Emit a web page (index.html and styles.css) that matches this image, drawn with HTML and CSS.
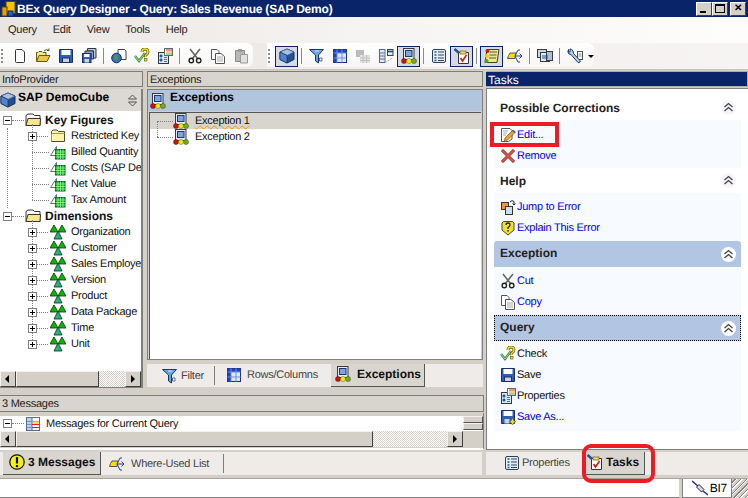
FILE: index.html
```html
<!DOCTYPE html>
<html lang="en">

<head>
    <meta charset="UTF-8">
    <title>BEx Query Designer</title>
    <link rel="stylesheet" href="styles.css">
</head>

<body>
    <svg class="icon-defs" width="0" height="0">
        <symbol id="i-page" viewBox="0 0 16 16"><path d="M3.5 2.5Q3.5 1.5 4.5 1.5H10L12.500 4V13.500Q12.500 14.500 11.500 14.500H4.500Q3.500 14.500 3.500 13.500Z" fill="#fff" stroke="#333"/></symbol>
        <symbol id="i-open" viewBox="0 0 16 16"><path d="M1.500 13.500V4.500H3L4 3.500H7L8 4.500H11V7" fill="#f7e58c" stroke="#665a10"/><path d="M1.500 13.500L4 7.500H15L12 13.500Z" fill="#e8c94a" stroke="#665a10"/><path d="M9 3Q11 0.500 14 2.500M14 2.500V0.500M14 2.500H12" fill="none" stroke="#2a5a2a"/></symbol>
        <symbol id="i-save" viewBox="0 0 16 16"><path d="M1.500 1.500H14.500V14.500H1.500Z" fill="#2e5fb5" stroke="#1a2f6a"/><rect x="3.500" y="2" width="9" height="5" fill="#fff"/><rect x="4.500" y="10" width="7" height="4.500" fill="#c9d3e6" stroke="#1a2f6a"/></symbol>
        <symbol id="i-saveall" viewBox="0 0 16 16"><path d="M6.500 0.500H15V10H12.500V3H6.500Z" fill="#b9c6dd" stroke="#333"/><path d="M4 3H12.500V11H10V5.500H4Z" fill="#8da3c9" stroke="#333"/><rect x="1.500" y="5.500" width="8.500" height="9" fill="#2e5fb5" stroke="#1a2f6a"/><rect x="3" y="6" width="5.500" height="3" fill="#fff"/><rect x="3.500" y="11" width="4.500" height="3.500" fill="#c9d3e6"/></symbol>
        <symbol id="i-cubeglobe" viewBox="0 0 16 16"><path d="M7 1.500H13.500L15 3V11.500H7Z" fill="#fff" stroke="#444"/><circle cx="5.500" cy="10" r="4.800" fill="#3c6fc0" stroke="#1a2f6a"/><path d="M3 7.500L6.500 6.500L7 10L5 13L3.500 10.500Z" fill="#4d9a3c"/></symbol>
        <symbol id="i-check" viewBox="0 0 16 16"><path d="M1 8L5 13L11 5" fill="none" stroke="#3d8b3d" stroke-width="2.400"/><path d="M1 8L5 13L11 5" fill="none" stroke="#bce0a8" stroke-width="0.800"/><path d="M8 4Q8 1 11 1T14 4Q14 5.500 12.500 6.500T11.500 9" fill="none" stroke="#5c5200" stroke-width="2.800"/><path d="M8 4Q8 1 11 1T14 4Q14 5.500 12.500 6.500T11.500 9" fill="none" stroke="#f2e020" stroke-width="1.500"/><rect x="10.500" y="10.500" width="2.500" height="2.500" fill="#f2e020" stroke="#5c5200" stroke-width="0.600"/></symbol>
        <symbol id="i-props" viewBox="0 0 16 16"><rect x="1.500" y="4.500" width="10" height="11" fill="#dce7f7" stroke="#334"/><path d="M3 7H5V9H3ZM3 11H5V13H3ZM7 7.500H10M7 9.500H10M7 11.500H10M7 13.500H10" fill="#1b5a9c" stroke="#1b5a9c" stroke-width="0.800"/><rect x="7.500" y="0.500" width="8" height="7" fill="#fff" stroke="#666"/><path d="M9 2H15" stroke="#d22" /><path d="M9 4H15" stroke="#e90"/><path d="M9 6H15" stroke="#4a4"/></symbol>
        <symbol id="i-cut" viewBox="0 0 16 16"><path d="M3 1L10.500 10.500M13 1L5.500 10.500" fill="none" stroke="#5d6560" stroke-width="1.500"/><circle cx="4.300" cy="12.500" r="2.200" fill="#fff" stroke="#222" stroke-width="1.400"/><circle cx="11.700" cy="12.500" r="2.200" fill="#fff" stroke="#222" stroke-width="1.400"/></symbol>
        <symbol id="i-copy" viewBox="0 0 16 16"><path d="M1.500 1.500H7L9 3.500V11.500H1.500Z" fill="#fff" stroke="#555"/><path d="M5.500 5.500H11L14.500 8.500V15.500H5.500Z" fill="#fff" stroke="#555"/><path d="M7 9H13M7 11H13M7 13H13" stroke="#aaa"/></symbol>
        <symbol id="i-paste" viewBox="0 0 16 16"><path d="M2.500 2.500H11.500V13.500H2.500Z" fill="#b8b8b8" stroke="#8c8c8c"/><rect x="5" y="1" width="4" height="3" fill="#9a9a9a"/><path d="M7.500 6.500H14.500V15H7.500Z" fill="#e0e0e0" stroke="#9a9a9a"/></symbol>
        <symbol id="i-cube" viewBox="0 0 16 16"><path d="M8 1L15 4V11.500L8 15L1 11.500V4Z" fill="#234e91" stroke="#1a2f5a"/><path d="M8 1L15 4L8 7.500L1 4Z" fill="#a9c0de" stroke="#3b5a8c" stroke-width="0.700"/><path d="M1 4L8 7.500V15L1 11.500Z" fill="#4f86c9" stroke="#1a2f5a" stroke-width="0.700"/></symbol>
        <symbol id="i-filter" viewBox="0 0 16 16"><path d="M0.500 1.500H14.500L9.500 7V15L6.500 13V7Z" fill="#6aa5de" stroke="#16386e"/><path d="M6 3H10" stroke="#d8ebfa"/><path d="M10.500 10H13V13H10.500Z" fill="#fff" stroke="#16386e" stroke-width="0.700"/></symbol>
        <symbol id="i-grid" viewBox="0 0 16 16"><rect x="1.500" y="1.500" width="13" height="13" fill="#dce8fa" stroke="#182f8a"/><path d="M1.500 1.500H14.500V5H1.500ZM1.500 1.500H5V14.500H1.500Z" fill="#2443b8"/><path d="M5 1.500V14.500M10 1.500V14.500M1.500 5H14.500M1.500 10H14.500" stroke="#6f8fe0"/></symbol>
        <symbol id="i-flag" viewBox="0 0 16 16"><rect x="1" y="2" width="8" height="7" fill="#bcbcbc"/><path d="M5 7H15V15H5Z" fill="#e2e2e2"/><path d="M8 7V15M11.500 7V15M5 10H15M5 12.500H15" stroke="#c2c2c2"/></symbol>
        <symbol id="i-fields" viewBox="0 0 16 16"><rect x="1.500" y="1.500" width="5.500" height="13" fill="#dfe8f6" stroke="#5a6a8c"/><path d="M2 5H6.500M2 8H6.500M2 11H6.500" stroke="#5a6a8c"/><rect x="9.500" y="1.500" width="5.500" height="6" fill="#dfe8f6" stroke="#22408c"/><path d="M9.500 3.500H15" stroke="#22408c" stroke-width="1.500"/><path d="M8.500 14L15 9.500" stroke="#8a8a8a" stroke-dasharray="1 1"/></symbol>
        <symbol id="i-exc" viewBox="0 0 16 16"><rect x="2.500" y="0.500" width="10.500" height="11" fill="#e9e9e9" stroke="#3a3a3a"/><rect x="4.500" y="2.500" width="6.500" height="6" fill="#7aa4e4" stroke="#22386c"/><circle cx="3" cy="13" r="2.500" fill="#c11" stroke="#511" stroke-width="0.500"/><circle cx="8" cy="13" r="2.500" fill="#ee1" stroke="#661" stroke-width="0.500"/><circle cx="13" cy="13" r="2.500" fill="#7a2" stroke="#251" stroke-width="0.500"/></symbol>
        <symbol id="i-list" viewBox="0 0 16 16"><rect x="1.500" y="1.500" width="13" height="13" rx="1.500" fill="#e4effc" stroke="#33405c"/><path d="M3.500 4H5.500M3.500 7H5.500M3.500 10H5.500M3.500 12.500H5.500" stroke="#1b5a9c" stroke-width="1.500"/><path d="M7 4H13M7 7H13M7 10H13M7 12.500H13" stroke="#33405c"/></symbol>
        <symbol id="i-tasks" viewBox="0 0 16 16"><path d="M4.500 4.500H14.500V15.500H4.500Z" fill="#fff" stroke="#333"/><rect x="6" y="3" width="6" height="3" fill="#f0dc70" stroke="#665a10" stroke-width="0.700"/><path d="M6.500 10L8.500 13L12.500 7" fill="none" stroke="#d01818" stroke-width="1.600"/><path d="M0.500 1L5 5" stroke="#24509c" stroke-width="2.400"/></symbol>
        <symbol id="i-script" viewBox="0 0 16 16"><path d="M3 1.500H15L13 14.500H1Z" fill="#f0e68c" stroke="#3a4a1a"/><path d="M6 4H13M5.500 7H12.500M5 10H12" stroke="#555"/><circle cx="3.500" cy="3" r="2" fill="#c11"/><circle cx="3" cy="8" r="2" fill="#e5cf20"/><circle cx="2.500" cy="13" r="2" fill="#5a9a2c"/></symbol>
        <symbol id="i-where" viewBox="0 0 16 16"><path d="M1.500 7.500L3 5H9L8 10.500H0.500Z" fill="#f2e000" stroke="#555"/><path d="M8 8H15M12.500 5.500L15 8L12.500 10.500M8 8L11 2H13M8 8L11 14H13" fill="none" stroke="#2a3a9c"/></symbol>
        <symbol id="i-multi" viewBox="0 0 16 16"><rect x="0.500" y="1.500" width="9" height="8" fill="#c9d6ea" stroke="#3a3a3a"/><rect x="3.500" y="4.500" width="9" height="9" fill="#dfe7f3" stroke="#3a3a3a"/><rect x="9.500" y="3.500" width="6" height="9" fill="#aebfdc" stroke="#3a3a3a"/><path d="M5 8H11M5 10H11" stroke="#24509c"/></symbol>
        <symbol id="i-wrench" viewBox="0 0 16 16"><rect x="10.500" y="3.500" width="5" height="8" fill="#fff" stroke="#555"/><path d="M11.500 6H14.500M11.500 8H14.500" stroke="#888"/><path d="M1.500 1.500Q0 4 2 6L4 6.500L10.500 14Q12 15.500 13 14T12 11.500L6.500 5.500L6 3Q4.500 0.500 3 1V4H1.500Z" fill="#b8cfe8" stroke="#16386e"/></symbol>
        <symbol id="i-folder" viewBox="0 0 16 16"><path d="M1.500 3.500L3 2H7L8.500 3.500H14.500V13.500H1.500Z" fill="#fff3b0" stroke="#4a4a2a"/><path d="M1.500 13.500V5.500H14.500" fill="none" stroke="#a89a40"/></symbol>
        <symbol id="i-folderopen" viewBox="0 0 16 16"><path d="M1 13.500V3.500L3 2H8L9.500 3.500H15V13.500Z" fill="#fff" stroke="#333"/><path d="M1 13.500L3 6.500H15.500L15 13.500Z" fill="#f7e98a" stroke="#333"/></symbol>
        <symbol id="i-keyfig" viewBox="0 0 16 16"><path d="M0.500 11.500L6.500 2.500V11.500Z" fill="#fff" stroke="#707070"/><rect x="5.500" y="5.500" width="9.500" height="9.500" fill="#0a0" stroke="#064"/><path d="M8 5.500V15M10.500 5.500V15M13 5.500V15M5.500 8H15M5.500 10.500H15M5.500 13H15" stroke="#9f9" stroke-width="0.800"/></symbol>
        <symbol id="i-dim" viewBox="0 0 16 16"><path d="M4 1L8 8H0Z" fill="#0b0" stroke="#030" stroke-width="0.800"/><path d="M12 1L16 8H8Z" fill="#0b0" stroke="#030" stroke-width="0.800"/><path d="M8 7L12 15H4Z" fill="#3a8" stroke="#030" stroke-width="0.800"/></symbol>
        <symbol id="i-msgs" viewBox="0 0 16 16"><rect x="1.500" y="1.500" width="13" height="13" fill="#fff" stroke="#5a6a8c"/><rect x="2" y="2" width="5" height="12" fill="#b9d3f2"/><path d="M7 2V14" stroke="#5a6a8c"/><path d="M2 5.500H14M2 8.500H14M2 11.500H14" stroke="#7f93b8"/><rect x="8" y="5.500" width="6" height="3" fill="#f2e24a"/><path d="M7 8.500H14M7 11.500H14" stroke="#d22"/></symbol>
        <symbol id="i-warn" viewBox="0 0 16 16"><circle cx="8" cy="8" r="7.200" fill="#f5ee20" stroke="#111" stroke-width="1.200"/><path d="M8 3V9.500" stroke="#111" stroke-width="2.200"/><rect x="6.900" y="11" width="2.200" height="2.200" fill="#111"/></symbol>
        <symbol id="i-edit" viewBox="0 0 16 16"><path d="M1.500 1.500H10L12 3.500V12L8.500 14.500H1.500Z" fill="#fff" stroke="#555"/><path d="M3 4H8M3 6H7M3 8H6" stroke="#9ab"/><path d="M4 15L5 11L13 3L15.500 5L7.500 13Z" fill="#f0a030" stroke="#7a4a10" stroke-width="0.700"/><path d="M13 3L15.500 5L14.500 6L12 4Z" fill="#3a5fc0"/></symbol>
        <symbol id="i-remove" viewBox="0 0 16 16"><path d="M2 2L14 14M14 2L2 14" stroke="#7a1a14" stroke-width="3"/><path d="M2 2L14 14M14 2L2 14" stroke="#e25c48" stroke-width="1.600"/></symbol>
        <symbol id="i-jump" viewBox="0 0 16 16"><rect x="1.500" y="3.500" width="7" height="7" fill="#f09a20" stroke="#333"/><rect x="5.500" y="7.500" width="7" height="8" fill="#cfe0f4" stroke="#333"/><path d="M10 3Q12 0.500 14 2.500V6M12.500 4.500L14 6L15.500 4.500" fill="none" stroke="#222"/></symbol>
        <symbol id="i-explain" viewBox="0 0 16 16"><path d="M3.500 1.500H12.500L14 3V10L8 15L2 10V3Z" fill="#efe02c" stroke="#4a4a2a"/><path d="M6 5Q6 3 8 3T10 5Q10 6.500 8 7.500V9" fill="none" stroke="#222" stroke-width="1.300"/><rect x="7.300" y="10" width="1.500" height="1.500" fill="#222"/></symbol>
        <symbol id="i-saveas" viewBox="0 0 16 16"><path d="M1.500 1.500H14.500V14.500H1.500Z" fill="#2e5fb5" stroke="#1a2f6a"/><rect x="3.500" y="2" width="9" height="5" fill="#fff"/><rect x="4.500" y="10" width="5" height="4.500" fill="#c9d3e6"/><path d="M12.500 9L14 12L16 12.500L14 13.500L12.500 16L11 13.500L9 12.500L11 12Z" fill="#f2e020" stroke="#665a10" stroke-width="0.500"/></symbol>
        <symbol id="i-plug" viewBox="0 0 16 16"><path d="M0 1L6 6M11 11L16 15" stroke="#1a2f8a" stroke-width="1.400"/><path d="M4.500 7L7 4.500L12 9.500L9.500 12Z" fill="#d8d8e8" stroke="#222"/></symbol>
        <symbol id="i-app" viewBox="0 0 16 16"><rect x="5" y="0.500" width="9" height="12" fill="#f5c400" stroke="#5a4400"/><rect x="1" y="6" width="5" height="9" fill="#e8a000" stroke="#5a4400"/><rect x="7" y="10" width="5" height="5" fill="#2a5ec0" stroke="#112a6a"/></symbol>
        <symbol id="i-chev" viewBox="0 0 15 15"><path d="M3.500 7L7.500 3.500L11.500 7M3.500 11L7.500 7.500L11.500 11" fill="none" stroke="#444" stroke-width="1.300"/></symbol>
        <symbol id="i-sort" viewBox="0 0 9 13"><path d="M0.500 5L4.500 1L8.500 5ZM0.500 8L4.500 12L8.500 8Z" fill="#dcd8d2" stroke="#555"/></symbol>
    </svg>

    <div class="window">
        <div class="title-bar">
            <svg class="ico"><use href="#i-app"></use></svg>
            <span class="title-text">BEx Query Designer - Query: Sales Revenue (SAP Demo)</span>
            <div class="win-buttons">
                <span class="win-btn"><i class="glyph-min"></i></span>
                <span class="win-btn"><i class="glyph-max"></i></span>
                <span class="win-btn win-close">✕</span>
            </div>
        </div>

        <div class="menu-bar">
            <span>Query</span>
            <span>Edit</span>
            <span>View</span>
            <span>Tools</span>
            <span>Help</span>
        </div>

        <div class="toolbar-band">
            <div class="toolbar toolbar-first">
                <span class="grip"></span>
                <span class="tool"><svg class="ico"><use href="#i-page"></use></svg></span>
                <span class="tool"><svg class="ico"><use href="#i-open"></use></svg></span>
                <span class="tool"><svg class="ico"><use href="#i-save"></use></svg></span>
                <span class="tool"><svg class="ico"><use href="#i-saveall"></use></svg></span>
                <span class="sep"></span>
                <span class="tool"><svg class="ico"><use href="#i-cubeglobe"></use></svg></span>
                <span class="tool"><svg class="ico"><use href="#i-check"></use></svg></span>
                <span class="tool"><svg class="ico"><use href="#i-props"></use></svg></span>
                <span class="sep"></span>
                <span class="tool"><svg class="ico"><use href="#i-cut"></use></svg></span>
                <span class="tool"><svg class="ico"><use href="#i-copy"></use></svg></span>
                <span class="tool"><svg class="ico"><use href="#i-paste"></use></svg></span>
            </div>
            <div class="toolbar toolbar-second">
                <span class="grip"></span>
                <span class="tool active"><svg class="ico"><use href="#i-cube"></use></svg></span>
                <span class="sep"></span>
                <span class="tool"><svg class="ico"><use href="#i-filter"></use></svg></span>
                <span class="tool"><svg class="ico"><use href="#i-grid"></use></svg></span>
                <span class="tool"><svg class="ico"><use href="#i-flag"></use></svg></span>
                <span class="tool"><svg class="ico"><use href="#i-fields"></use></svg></span>
                <span class="tool active"><svg class="ico"><use href="#i-exc"></use></svg></span>
                <span class="sep"></span>
                <span class="tool"><svg class="ico"><use href="#i-list"></use></svg></span>
                <span class="tool active"><svg class="ico"><use href="#i-tasks"></use></svg></span>
                <span class="sep"></span>
                <span class="tool active"><svg class="ico"><use href="#i-script"></use></svg></span>
                <span class="tool"><svg class="ico"><use href="#i-where"></use></svg></span>
                <span class="sep"></span>
                <span class="tool"><svg class="ico"><use href="#i-multi"></use></svg></span>
                <span class="sep"></span>
                <span class="tool"><svg class="ico"><use href="#i-wrench"></use></svg></span>
                <span class="drop-arrow"></span>
            </div>
        </div>

        <div class="workspace">
            <div class="work-left">
                <div class="work-top">
                    <div class="dock dock-info">
                        <div class="dock-title">InfoProvider</div>
                        <div class="info-panel">
                            <div class="info-head">
                                <svg class="ico"><use href="#i-cube"></use></svg>
                                <span class="info-name">SAP DemoCube</span>
                                <svg class="sorter"><use href="#i-sort"></use></svg>
                            </div>
                            <div class="tree">
                                <div class="tree-row"><span class="box minus"></span><span class="dots"></span><svg class="ico"><use href="#i-folderopen"></use></svg><b>Key Figures</b></div>
                                <div class="branch-root">
                                    <div class="branch">
                                        <div class="tree-row"><span class="box plus"></span><span class="dots"></span><svg class="ico"><use href="#i-folder"></use></svg><span>Restricted Key</span></div>
                                        <div class="tree-row"><span class="dots long"></span><svg class="ico"><use href="#i-keyfig"></use></svg><span>Billed Quantity</span></div>
                                        <div class="tree-row"><span class="dots long"></span><svg class="ico"><use href="#i-keyfig"></use></svg><span>Costs (SAP De</span></div>
                                        <div class="tree-row"><span class="dots long"></span><svg class="ico"><use href="#i-keyfig"></use></svg><span>Net Value</span></div>
                                        <div class="tree-row"><span class="dots long"></span><svg class="ico"><use href="#i-keyfig"></use></svg><span>Tax Amount</span></div>
                                    </div>
                                </div>
                                <div class="tree-row"><span class="box minus"></span><span class="dots"></span><svg class="ico"><use href="#i-folderopen"></use></svg><b>Dimensions</b></div>
                                <div class="branch-plain">
                                    <div class="branch">
                                        <div class="tree-row"><span class="box plus"></span><span class="dots"></span><svg class="ico"><use href="#i-dim"></use></svg><span>Organization</span></div>
                                        <div class="tree-row"><span class="box plus"></span><span class="dots"></span><svg class="ico"><use href="#i-dim"></use></svg><span>Customer</span></div>
                                        <div class="tree-row"><span class="box plus"></span><span class="dots"></span><svg class="ico"><use href="#i-dim"></use></svg><span>Sales Employe</span></div>
                                        <div class="tree-row"><span class="box plus"></span><span class="dots"></span><svg class="ico"><use href="#i-dim"></use></svg><span>Version</span></div>
                                        <div class="tree-row"><span class="box plus"></span><span class="dots"></span><svg class="ico"><use href="#i-dim"></use></svg><span>Product</span></div>
                                        <div class="tree-row"><span class="box plus"></span><span class="dots"></span><svg class="ico"><use href="#i-dim"></use></svg><span>Data Package</span></div>
                                        <div class="tree-row"><span class="box plus"></span><span class="dots"></span><svg class="ico"><use href="#i-dim"></use></svg><span>Time</span></div>
                                        <div class="tree-row"><span class="box plus"></span><span class="dots"></span><svg class="ico"><use href="#i-dim"></use></svg><span>Unit</span></div>
                                    </div>
                                </div>
                            </div>
                            <div class="scrollbar">
                                <span class="sb-btn sb-left"></span>
                                <span class="sb-thumb thumb-info"></span>
                                <span class="sb-track"></span>
                                <span class="sb-btn sb-right"></span>
                            </div>
                        </div>
                    </div>

                    <div class="dock dock-exc">
                        <div class="dock-title">Exceptions</div>
                        <div class="exc-panel">
                            <div class="exc-head">
                                <svg class="ico"><use href="#i-exc"></use></svg>
                                <b>Exceptions</b>
                            </div>
                            <div class="exc-list">
                                <div class="exc-branch">
                                    <div class="exc-row selected"><span class="dots exc-dots"></span><svg class="ico"><use href="#i-exc"></use></svg><span class="squiggle">Exception 1</span></div>
                                    <div class="exc-row"><span class="dots exc-dots"></span><svg class="ico"><use href="#i-exc"></use></svg><span>Exception 2</span></div>
                                </div>
                            </div>
                        </div>
                        <div class="tabs tabs-exc">
                            <span class="tab tab-filter"><svg class="ico"><use href="#i-filter"></use></svg>Filter</span>
                            <span class="tab tab-rows"><svg class="ico"><use href="#i-grid"></use></svg>Rows/Columns</span>
                            <span class="tab tab-on"><svg class="ico"><use href="#i-exc"></use></svg>Exceptions</span>
                        </div>
                    </div>
                </div>

                <div class="messages">
                    <div class="dock-title msg-title">3 Messages</div>
                    <div class="msg-panel">
                        <div class="msg-main">
                            <div class="tree-row msg-row"><span class="box minus"></span><span class="dots"></span><svg class="ico"><use href="#i-msgs"></use></svg><span>Messages for Current Query</span></div>
                            <div class="scrollbar">
                                <span class="sb-btn sb-left"></span>
                                <span class="sb-thumb thumb-msg"></span>
                                <span class="sb-track"></span>
                                <span class="sb-btn sb-right"></span>
                            </div>
                        </div>
                        <div class="msg-side">
                            <span class="mini-btn"></span>
                            <span class="mini-btn"></span>
                        </div>
                    </div>
                    <div class="tabs tabs-msg">
                        <span class="tab tab-on tab-msg"><svg class="ico"><use href="#i-warn"></use></svg>3 Messages</span>
                        <span class="tab tab-where"><svg class="ico"><use href="#i-where"></use></svg>Where-Used List</span>
                    </div>
                </div>
            </div>

            <div class="work-right">
                <div class="dock-title title-active">Tasks</div>
                <div class="tasks-panel">
                    <div class="task-head head-first">
                        <span>Possible Corrections</span><svg class="chevrons"><use href="#i-chev"></use></svg>
                    </div>
                    <div class="task-body body-low">
                        <a class="task"><svg class="ico"><use href="#i-edit"></use></svg>Edit...</a>
                        <a class="task"><svg class="ico"><use href="#i-remove"></use></svg>Remove</a>
                    </div>
                    <div class="task-head head-help">
                        <span>Help</span><svg class="chevrons"><use href="#i-chev"></use></svg>
                    </div>
                    <div class="task-body body-mid">
                        <a class="task"><svg class="ico"><use href="#i-jump"></use></svg>Jump to Error</a>
                        <a class="task"><svg class="ico"><use href="#i-explain"></use></svg>Explain This Error</a>
                    </div>
                    <div class="task-head head-blue">
                        <span>Exception</span><svg class="chevrons"><use href="#i-chev"></use></svg>
                    </div>
                    <div class="task-body body-mid">
                        <a class="task"><svg class="ico"><use href="#i-cut"></use></svg>Cut</a>
                        <a class="task"><svg class="ico"><use href="#i-copy"></use></svg>Copy</a>
                    </div>
                    <div class="task-head head-blue head-focus">
                        <span>Query</span><svg class="chevrons"><use href="#i-chev"></use></svg>
                    </div>
                    <div class="task-body">
                        <a class="task task-off"><svg class="ico"><use href="#i-check"></use></svg>Check</a>
                        <a class="task task-off"><svg class="ico"><use href="#i-save"></use></svg>Save</a>
                        <a class="task task-off"><svg class="ico"><use href="#i-props"></use></svg>Properties</a>
                        <a class="task"><svg class="ico"><use href="#i-saveas"></use></svg>Save As...</a>
                    </div>
                </div>
                <div class="tabs tabs-tasks">
                    <span class="tab tab-props"><svg class="ico"><use href="#i-list"></use></svg>Properties</span>
                    <span class="tab tab-on tab-tasks"><svg class="ico"><use href="#i-tasks"></use></svg>Tasks</span>
                </div>
            </div>
        </div>

        <div class="status-bar">
            <span class="status-main"></span>
            <span class="status-sys"><svg class="ico"><use href="#i-plug"></use></svg>BI7</span>
            <span class="status-grip"></span>
        </div>

        <!-- red annotation marks from the screenshot -->
        <span class="mark mark-edit"></span>
        <span class="mark mark-tasks"></span>
    </div>
</body>

</html>
```
FILE: styles.css
```css
* {
    box-sizing: border-box;
}

body {
    margin: 0;
    font-family: "Liberation Sans", Arial, sans-serif;
    font-size: 11px;
    letter-spacing: -0.25px;
    text-rendering: geometricPrecision;
    color: #000;
    background-color: #d4d0c8;
}

.icon-defs {
    position: absolute;
}

.ico {
    width: 16px;
    height: 16px;
    flex: none;
}

.window {
    position: relative;
    width: 748px;
    height: 498px;
    display: flex;
    flex-direction: column;
    overflow: hidden;
}

/* title bar */
.title-bar {
    height: 17px;
    flex: none;
    display: flex;
    align-items: center;
    padding-left: 1px;
    background-color: #0a246a;
    color: #fff;
}

.title-text {
    font-size: 12px;
    font-weight: bold;
    letter-spacing: -0.2px;
}

.win-buttons {
    margin-left: auto;
    margin-right: 2px;
    display: flex;
}

.win-btn {
    width: 16px;
    height: 14px;
    display: flex;
    align-items: center;
    justify-content: center;
    background-color: #d4d0c8;
    color: #000;
    border: 1px solid;
    border-color: #fff #404040 #404040 #fff;
    font-size: 10px;
    font-weight: bold;
}

.win-close {
    margin-left: 2px;
}

.glyph-min {
    width: 6px;
    height: 2px;
    margin-top: 6px;
    margin-right: 2px;
    background-color: #000;
}

.glyph-max {
    width: 10px;
    height: 9px;
    border: 1px solid #000;
    border-top-width: 2px;
}

/* menu and toolbars */
.menu-bar {
    height: 26px;
    flex: none;
    display: flex;
    align-items: center;
    gap: 16px;
    padding-left: 8px;
    background: linear-gradient(90deg, #e9e6e2, #f6f4f2 50%, #fdfdfc);
    color: #222;
}

.toolbar-band {
    height: 27px;
    flex: none;
    display: flex;
    padding-bottom: 2px;
    background: linear-gradient(90deg, #e6e3df, #f0edea 50%, #f6f4f2);
    border-bottom: 1px solid #c8c4bc;
}

.toolbar {
    display: flex;
    align-items: center;
    padding-top: 2px;
    background: linear-gradient(#fff, #f7f6f5);
    border-radius: 0 6px 6px 0;
}

.toolbar-first {
    width: 253px;
}

.toolbar-second {
    width: 327px;
    margin-left: 14px;
}

.grip {
    width: 8px;
    height: 15px;
    background: repeating-linear-gradient(#8a8a8a 0 2px, transparent 2px 4px) 1px 0 / 2px 100% no-repeat;
}

.toolbar-second .grip {
    width: 11px;
}

.tool {
    width: 23px;
    height: 21px;
    flex: none;
    display: flex;
    align-items: center;
    justify-content: center;
}

.tool.active {
    background-color: #d6dae6;
    border: 1px solid #0a246a;
}

.sep {
    width: 7px;
    height: 16px;
    flex: none;
    background: linear-gradient(#8a8a8a, #8a8a8a) center / 1px 100% no-repeat;
}

.drop-arrow {
    margin-left: 2px;
    border-left: 3px solid transparent;
    border-right: 3px solid transparent;
    border-top: 3px solid #000;
}

/* workspace */
.workspace {
    flex: 1;
    min-height: 0;
    display: flex;
    padding-top: 1px;
}

.work-left {
    width: 484px;
    flex: none;
    display: flex;
    flex-direction: column;
}

.work-top {
    height: 317px;
    flex: none;
    display: flex;
}

.work-right {
    width: 262px;
    margin-left: 2px;
    flex: none;
    display: flex;
    flex-direction: column;
}

.dock {
    display: flex;
    flex-direction: column;
}

.dock-info {
    width: 143px;
}

.dock-exc {
    width: 336px;
    margin-left: 4px;
}

.dock-title {
    height: 16px;
    flex: none;
    padding: 0 2px;
    line-height: 16px;
    color: #222;
    background-color: #d8d4ce;
    border: 1px solid #807c76;
    border-width: 1px 1px 1px 0;
}

.title-active {
    background-color: #0a246a;
    color: #fff;
    border-color: #b0aca4;
    font-size: 12px;
    letter-spacing: 0;
}

.msg-title {
    height: 17px;
}

.dock-exc .dock-title {
    border-left-width: 1px;
}

/* infoprovider */
.info-panel {
    margin-top: 2px;
    flex: 1;
    display: flex;
    flex-direction: column;
    min-height: 0;
    border-right: 2px solid #808080;
    border-bottom: 1px solid #808080;
}

.info-head {
    height: 22px;
    flex: none;
    display: flex;
    align-items: center;
    background-color: #dcd8d2;
    font-size: 12px;
    font-weight: bold;
    letter-spacing: 0;
}

.info-name {
    margin-left: 2px;
    padding-bottom: 6px;
}

.sorter {
    width: 9px;
    height: 13px;
    margin-left: auto;
    margin-right: 4px;
}

.tree {
    flex: 1;
    min-height: 0;
    overflow: hidden;
    background-color: #fff;
    padding-top: 1px;
}

.tree-row {
    height: 16px;
    display: flex;
    align-items: center;
    padding-left: 3px;
    white-space: nowrap;
    color: #111;
}

.tree-row b {
    margin-left: 4px;
    font-size: 12px;
    letter-spacing: 0;
}

.tree-row > span:last-child:not(.dots) {
    margin-left: 5px;
}

.box {
    position: relative;
    z-index: 1;
    width: 9px;
    height: 9px;
    flex: none;
    background-color: #fff;
    border: 1px solid #808080;
}

.minus {
    background: linear-gradient(#000, #000) center / 5px 1px no-repeat #fff;
}

.plus {
    background:
        linear-gradient(#000, #000) center / 5px 1px no-repeat,
        linear-gradient(#000, #000) center / 1px 5px no-repeat,
        #fff;
}

.dots {
    width: 12px;
    height: 1px;
    margin-right: 1px;
    flex: none;
    border-top: 1px dotted #808080;
}

.branch-root {
    margin-left: 7px;
    border-left: 1px dotted #808080;
}

.branch-plain {
    margin-left: 8px;
}

.branch {
    position: relative;
    margin-left: 24px;
}

.branch::before {
    content: "";
    position: absolute;
    left: 0;
    top: -4px;
    bottom: 8px;
    border-left: 1px dotted #808080;
}

.branch .tree-row {
    padding-left: 0;
}

.branch .box {
    margin-left: -4px;
}

.branch .dots {
    width: 11px;
    margin-right: 2px;
}

.branch .dots.long {
    width: 17px;
    margin-right: 1px;
}

/* scrollbars */
.scrollbar {
    height: 16px;
    flex: none;
    display: flex;
    background: repeating-conic-gradient(#d4d0c8 0 25%, #fff 0 50%) 0 0 / 2px 2px;
}

.sb-btn,
.sb-thumb {
    display: block;
    height: 16px;
    flex: none;
    background-color: #d4d0c8;
    border: 1px solid;
    border-color: #f4f2ee #404040 #404040 #f4f2ee;
}

.sb-btn {
    width: 16px;
    position: relative;
}

.sb-left::after,
.sb-right::after {
    content: "";
    position: absolute;
    top: 3px;
    border-top: 4px solid transparent;
    border-bottom: 4px solid transparent;
}

.sb-left::after {
    left: 4px;
    border-right: 4px solid #000;
}

.sb-right::after {
    left: 5px;
    border-left: 4px solid #000;
}

.sb-track {
    flex: 1;
}

.thumb-info {
    width: 83px;
}

.thumb-msg {
    width: 357px;
}

/* exceptions */
.exc-panel {
    margin-top: 2px;
    flex: 1;
    min-height: 0;
    display: flex;
    flex-direction: column;
    border: 1px solid #808080;
}

.exc-head {
    height: 21px;
    flex: none;
    display: flex;
    align-items: flex-start;
    padding-left: 2px;
    background-color: #b2c5df;
    font-size: 12px;
    letter-spacing: 0;
}

.exc-head .ico {
    margin-top: 3px;
}

.exc-head b {
    margin-left: 4px;
}

.exc-list {
    flex: 1;
    background-color: #fff;
    border-top: 1px solid #555;
    border-left: 1px solid #555;
    margin: 1px 1px 0 1px;
}

.exc-branch {
    position: relative;
}

.exc-branch::before {
    content: "";
    position: absolute;
    left: 7px;
    top: 8px;
    height: 16px;
    border-left: 1px dotted #808080;
}

.exc-row {
    height: 16px;
    display: flex;
    align-items: center;
    padding-left: 7px;
    white-space: nowrap;
    color: #111;
}

.exc-row.selected {
    background-color: #d8d4ce;
}

.exc-row > span:last-child {
    margin-left: 6px;
}

.exc-dots {
    width: 16px;
    margin-right: 0;
}

.squiggle {
    text-decoration: underline wavy #f59b00 1px;
    text-underline-offset: 1px;
}

/* tabs */
.tabs {
    display: flex;
    flex: none;
    align-items: stretch;
    background-color: #efebe9;
    color: #444;
}

.tabs-exc {
    height: 23px;
    margin-top: 4px;
    margin-bottom: 1px;
    padding-left: 12px;
}

.tab {
    display: flex;
    align-items: center;
    white-space: nowrap;
    padding-bottom: 2px;
}

.tab-filter {
    width: 56px;
    gap: 3px;
    padding-left: 3px;
    margin: 2px 0;
    padding-bottom: 0;
    border-right: 1px solid #807c76;
}

.tab-rows {
    width: 116px;
    padding-left: 11px;
    gap: 5px;
}

.tab-on {
    background-color: #d9d5cf;
    color: #111;
    font-weight: bold;
    font-size: 12px;
    letter-spacing: 0;
    border-right: 1px solid #555;
    border-bottom: 1px solid #555;
}

.tabs-exc .tab-on {
    width: 94px;
    padding-left: 4px;
    gap: 6px;
}

.messages {
    margin-top: 7px;
    display: flex;
    flex-direction: column;
    flex: 1;
    min-height: 0;
}

.msg-panel {
    height: 37px;
    margin-top: 1px;
    flex: none;
    display: flex;
    padding-top: 3px;
    border-right: 1px solid #808080;
    border-bottom: 2px solid #fff;
}

.msg-main {
    width: 463px;
    flex: none;
}

.msg-row {
    background-color: #fff;
    height: 15px;
}

.msg-side {
    flex: 1;
    display: flex;
    flex-direction: column;
    background-color: #fff;
    height: 15px;
}

.mini-btn {
    height: 7px;
    background-color: #d4d0c8;
    border: 1px solid;
    border-color: #f4f2ee #555 #555 #f4f2ee;
}

.tabs-msg {
    height: 23px;
    margin-top: 2px;
    margin-right: 2px;
    padding-left: 3px;
}

.tab-msg {
    width: 98px;
    padding-left: 6px;
    gap: 3px;
}

.tab-where {
    width: 123px;
    padding-left: 8px;
    gap: 6px;
    margin: 2px 0;
    padding-bottom: 0;
    border-right: 1px solid #807c76;
}

/* tasks */
.tasks-panel {
    height: 362px;
    margin-top: 1px;
    flex: none;
    padding: 0 7px;
    background-color: #fff;
    border-top: 1px solid #808080;
    border-left: 1px solid #808080;
    border-bottom: 1px solid #808080;
}

.task-head {
    height: 25px;
    display: flex;
    align-items: center;
    justify-content: space-between;
    padding: 0 5px 0 6px;
    font-size: 12px;
    font-weight: bold;
    letter-spacing: 0;
    color: #222;
    border-radius: 3px 3px 0 0;
}

.head-first {
    height: 31px;
    padding-top: 6px;
}

.head-blue {
    height: 26px;
    background-color: #b2c5e2;
}

.head-blue span {
    padding-bottom: 2px;
}

.head-focus {
    border: 1px dotted #000;
    border-radius: 0;
    padding: 0 4px 0 5px;
}

.chevrons {
    width: 15px;
    height: 15px;
    flex: none;
    border-radius: 50%;
    background-color: #f6f4f8;
}

.head-blue .chevrons {
    background-color: #fff;
}

.task-body {
    padding: 2px 0 4px 6px;
    background-color: #f7faff;
}

.body-low {
    padding-top: 4px;
    padding-bottom: 2px;
}

.body-mid {
    padding-top: 3px;
    padding-bottom: 3px;
}

.task {
    height: 21px;
    display: flex;
    align-items: center;
    gap: 1px;
    color: #0000e0;
}

.task-off {
    color: #111;
}

.tabs-tasks {
    height: 23px;
    margin-top: 2px;
}

.tab-props {
    width: 100px;
    padding-left: 18px;
    gap: 2px;
}

.tab-tasks {
    width: 59px;
    gap: 3px;
    padding-left: 1px;
}

/* status bar */
.status-bar {
    height: 20px;
    flex: none;
    display: flex;
    background-color: #d4d0c8;
    border-top: 1px solid #a8a49c;
}

.status-main {
    width: 679px;
    background-color: #fff;
    border-bottom: 1px solid #808080;
}

.status-sys {
    width: 50px;
    margin-left: 3px;
    display: flex;
    align-items: center;
    justify-content: flex-end;
    gap: 2px;
    padding-right: 4px;
    background-color: #fff;
    font-size: 12px;
    border: 1px solid #808080;
    border-top: 0;
}

.status-grip {
    flex: 1;
    background: repeating-linear-gradient(135deg, #d4d0c8 0 2px, #808080 2px 3px, #fff 3px 4px);
}

/* annotations */
.mark {
    position: absolute;
    border: 4px solid #ed1c24;
    pointer-events: none;
}

.mark-edit {
    left: 490px;
    top: 122px;
    width: 69px;
    height: 25px;
}

.mark-tasks {
    left: 582px;
    top: 444px;
    width: 73px;
    height: 39px;
    border-radius: 9px;
}
```
